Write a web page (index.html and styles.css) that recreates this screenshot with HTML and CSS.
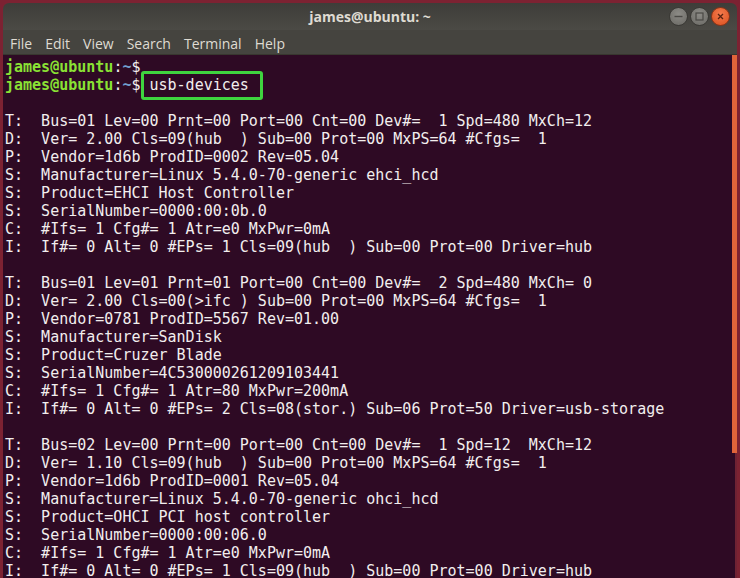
FILE: index.html
```html
<!DOCTYPE html>
<html lang="en">
  <head>
    <meta charset="UTF-8" />
    <title>james@ubuntu: ~</title>
    <link rel="stylesheet" href="styles.css">
  </head>
  <body>
    <div class="window">
      <div class="titlebar">
        <span></span>
        <span class="title">james@ubuntu: ~</span>
        <div class="controls">
          <span class="btn min"><svg width="17" height="17" viewBox="0 0 17 17"><path d="M4.5 8.5h8" stroke="#4a4945" stroke-width="1.4"/></svg></span>
          <span class="btn max"><svg width="17" height="17" viewBox="0 0 17 17"><rect x="5" y="5" width="7" height="7" fill="none" stroke="#4a4945" stroke-width="1.2"/></svg></span>
          <span class="btn close"><svg width="17" height="17" viewBox="0 0 17 17"><path d="M6 6l5 5M11 6l-5 5" stroke="#5a2210" stroke-width="1.3"/></svg></span>
        </div>
      </div>
      <nav class="menubar">
        <span>File</span>
        <span>Edit</span>
        <span>View</span>
        <span>Search</span>
        <span>Terminal</span>
        <span>Help</span>
      </nav>
      <div class="body">
<pre class="screen"><span class="user">james@ubuntu</span>:<span class="dir">~</span>$
<span class="user">james@ubuntu</span>:<span class="dir">~</span>$ <span class="cmd">usb-devices</span>

T:  Bus=01 Lev=00 Prnt=00 Port=00 Cnt=00 Dev#=  1 Spd=480 MxCh=12
D:  Ver= 2.00 Cls=09(hub  ) Sub=00 Prot=00 MxPS=64 #Cfgs=  1
P:  Vendor=1d6b ProdID=0002 Rev=05.04
S:  Manufacturer=Linux 5.4.0-70-generic ehci_hcd
S:  Product=EHCI Host Controller
S:  SerialNumber=0000:00:0b.0
C:  #Ifs= 1 Cfg#= 1 Atr=e0 MxPwr=0mA
I:  If#= 0 Alt= 0 #EPs= 1 Cls=09(hub  ) Sub=00 Prot=00 Driver=hub

T:  Bus=01 Lev=01 Prnt=01 Port=00 Cnt=00 Dev#=  2 Spd=480 MxCh= 0
D:  Ver= 2.00 Cls=00(>ifc ) Sub=00 Prot=00 MxPS=64 #Cfgs=  1
P:  Vendor=0781 ProdID=5567 Rev=01.00
S:  Manufacturer=SanDisk
S:  Product=Cruzer Blade
S:  SerialNumber=4C530000261209103441
C:  #Ifs= 1 Cfg#= 1 Atr=80 MxPwr=200mA
I:  If#= 0 Alt= 0 #EPs= 2 Cls=08(stor.) Sub=06 Prot=50 Driver=usb-storage

T:  Bus=02 Lev=00 Prnt=00 Port=00 Cnt=00 Dev#=  1 Spd=12  MxCh=12
D:  Ver= 1.10 Cls=09(hub  ) Sub=00 Prot=00 MxPS=64 #Cfgs=  1
P:  Vendor=1d6b ProdID=0001 Rev=05.04
S:  Manufacturer=Linux 5.4.0-70-generic ohci_hcd
S:  Product=OHCI PCI host controller
S:  SerialNumber=0000:00:06.0
C:  #Ifs= 1 Cfg#= 1 Atr=e0 MxPwr=0mA
I:  If#= 0 Alt= 0 #EPs= 1 Cls=09(hub  ) Sub=00 Prot=00 Driver=hub</pre>
        <div class="scrollbar">
          <div class="thumb"></div>
          <div class="track"></div>
        </div>
      </div>
    </div>
  </body>
</html>
```

FILE: styles.css
```css
html,
body {
  margin: 0;
  height: 100%;
  overflow: hidden;
}
body {
  background-color: #7c2232;
  padding: 3px 3px 0 3px;
  box-sizing: border-box;
}
.window {
  display: flex;
  flex-direction: column;
  height: 100%;
}
.titlebar {
  display: grid;
  grid-template-columns: 1fr auto 1fr;
  align-items: center;
  height: 27px;
  background: linear-gradient(#3e3d39, #4b4a45);
  border-radius: 6px 6px 0 0;
  color: #dfdbd2;
}
.title {
  font-family: "Open Sans", "DejaVu Sans", sans-serif;
  font-weight: bold;
  font-size: 14px;
}
.controls {
  justify-self: end;
  display: flex;
  gap: 1px;
  padding-right: 7px;
}
.btn {
  width: 17px;
  height: 17px;
  border-radius: 50%;
  display: flex;
}
.min,
.max {
  background: radial-gradient(circle at 50% 35%, #8c8b86, #6a6964);
  border: 1px solid #3a3935;
  margin-right: 1px;
}
.close {
  background: radial-gradient(circle at 50% 35%, #f47a4c, #d9501f);
  border: 1px solid #8a3418;
}
.menubar {
  display: flex;
  gap: 13px;
  height: 25px;
  align-items: center;
  padding: 3px 0 0 7px;
  background-color: #45443f;
  border-bottom: 1px solid #38372f;
  box-sizing: border-box;
  font-family: "Open Sans", "DejaVu Sans", sans-serif;
  font-size: 14px;
  color: #dfdbd2;
}
.body {
  flex: 1;
  display: flex;
  background-color: #2e0a24;
  min-height: 0;
}
.screen {
  flex: 1;
  margin: 0;
  padding: 3px 0 0 2px;
  font-family: "DejaVu Sans Mono", monospace;
  font-size: 15px;
  line-height: 18px;
  color: #f2eeee;
  overflow: hidden;
}
.user {
  color: #8ae234;
  font-weight: bold;
}
.dir {
  color: #729fcf;
  font-weight: bold;
}
.cmd {
  margin-left: -9px;
  padding: 2px 11px 3px 6px;
  border: 3px solid #3fd43f;
  border-radius: 3px;
}
.scrollbar {
  width: 5px;
  display: flex;
  flex-direction: column;
}
.thumb {
  height: 398px;
  background-color: #e0643a;
}
.track {
  flex: 1;
  border-right: 2px solid #6e2233;
}
```
